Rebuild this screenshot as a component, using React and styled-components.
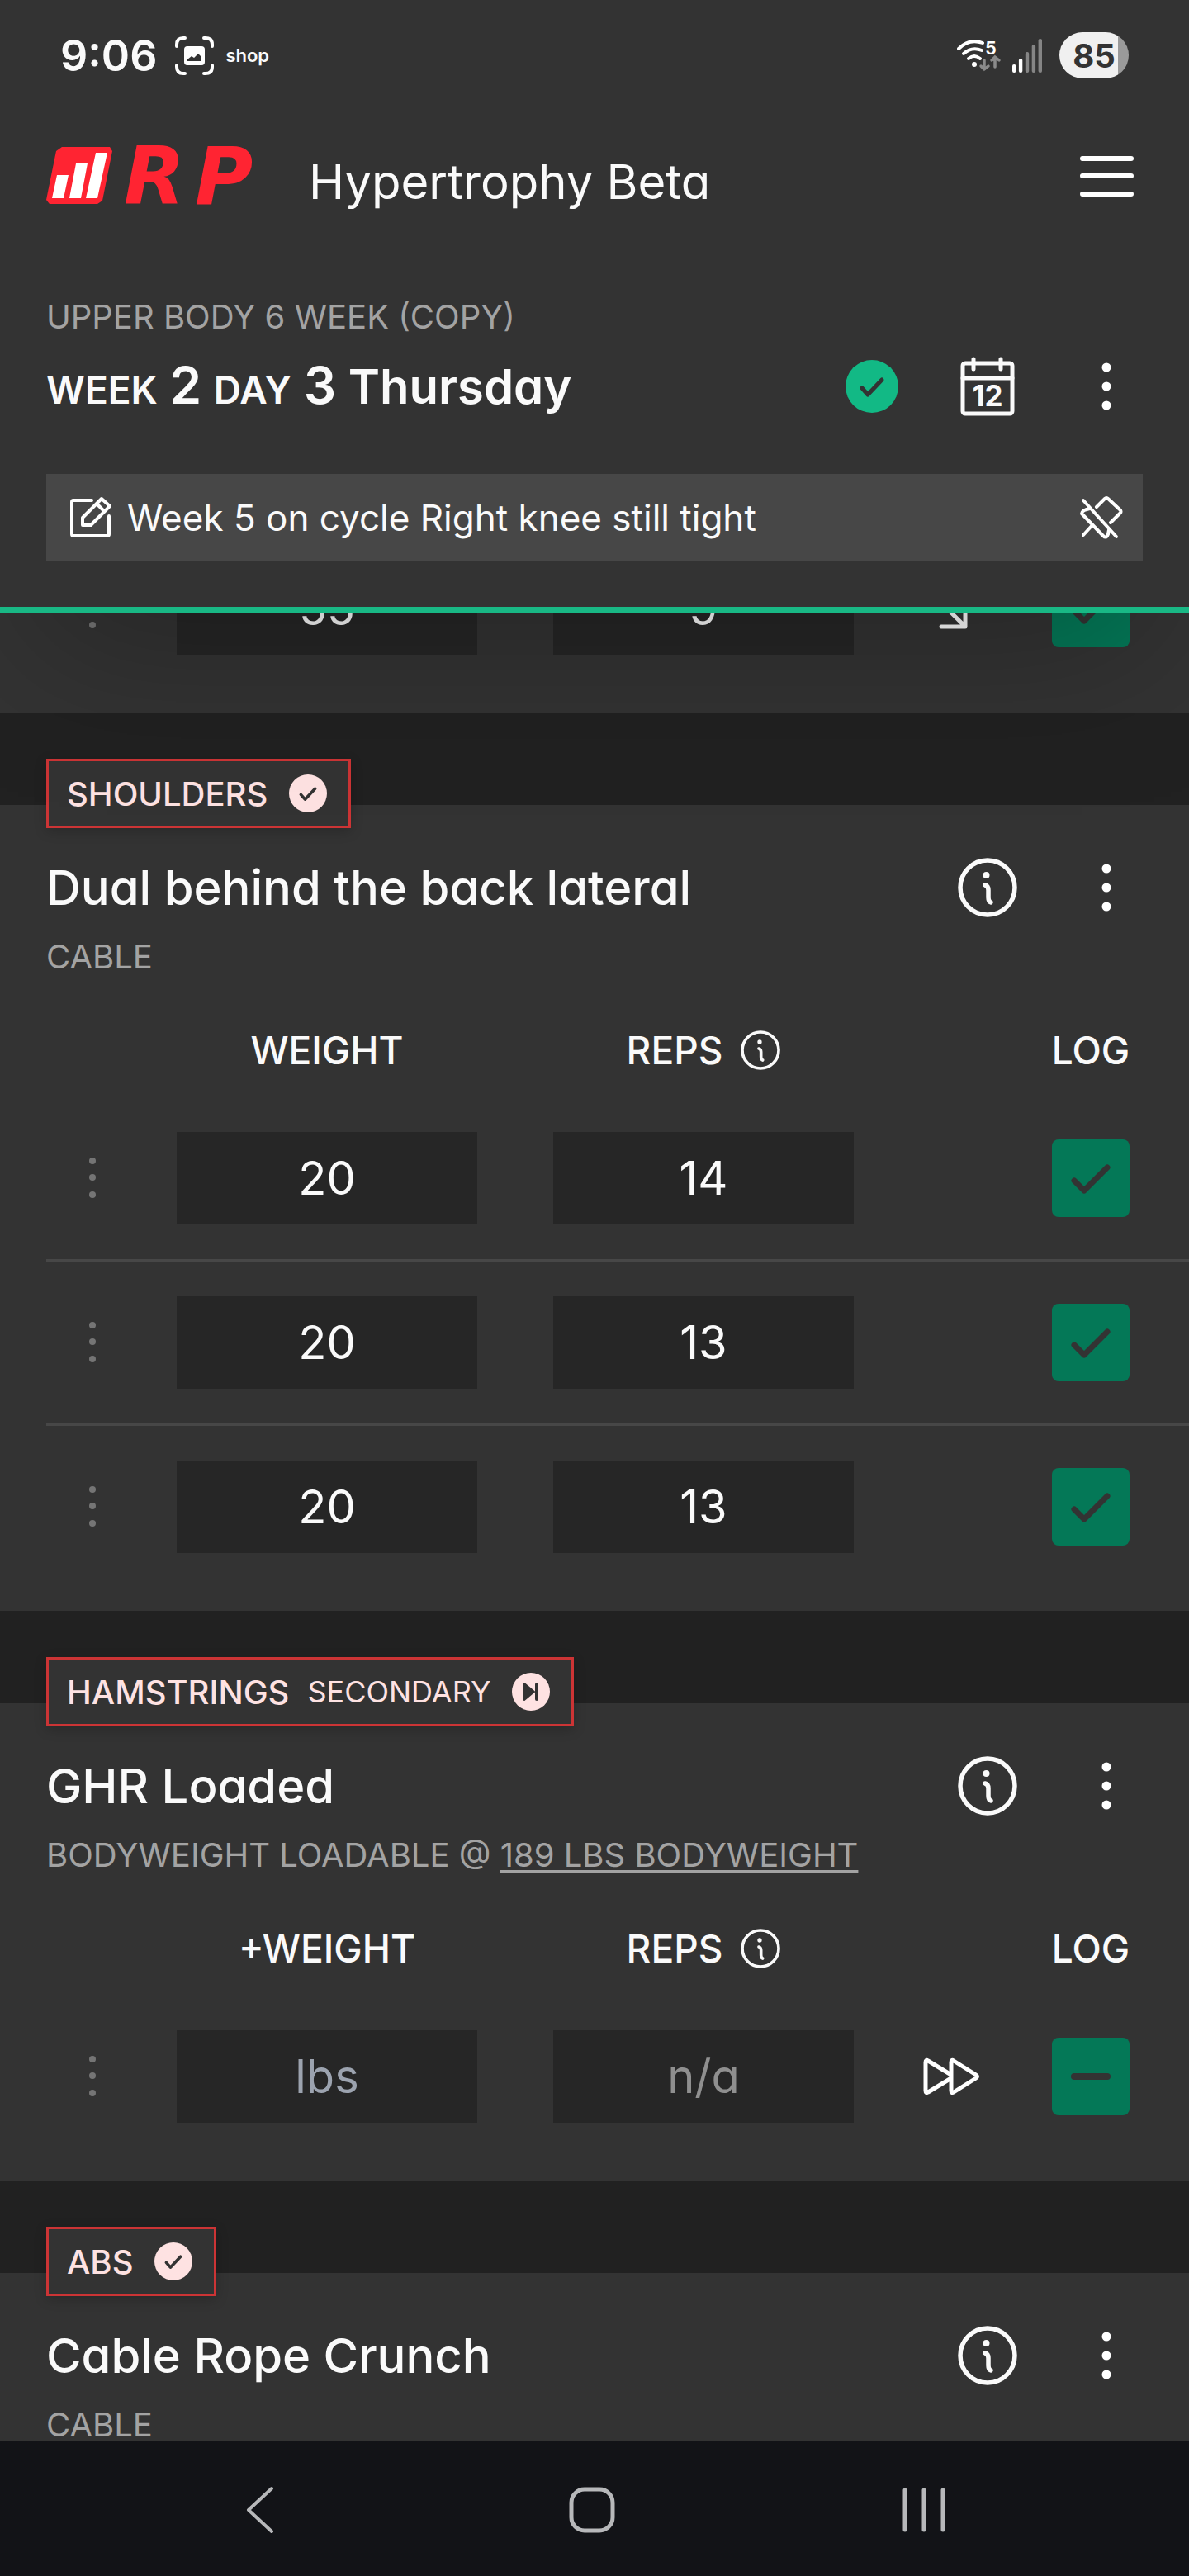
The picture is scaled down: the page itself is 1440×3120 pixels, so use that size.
import React, { useState } from 'react';
import styled, { createGlobalStyle } from 'styled-components';

const GlobalStyle = createGlobalStyle`
  * {
    box-sizing: border-box;
  }

  body {
    margin: 0;
    background: #212121;
    color: #fafafa;
    font-family: Inter, "Open Sans", sans-serif;
    font-feature-settings: "cv11";
  }

  button, input {
    font: inherit;
    font-feature-settings: inherit;
    color: inherit;
  }

  svg {
    display: block;
    flex: none;
  }
`;

/*============ layout ==============*/

const Screen = styled.div`
  display: flex;
  flex-direction: column;
  height: 100vh;
`;

const Header = styled.header`
  position: relative;
  z-index: 2;
  flex: none;
  background: #333;
  border-bottom: 7px solid #19b885;
  box-shadow: 0 88px 175px -42px rgba(0, 0, 0, 0.25);
`;

// the list is scrolled a little way under the header
const Workout = styled.main`
  flex: 1;
  min-height: 0;
  margin-top: -103px;
  overflow: hidden;
`;

const Row = styled.div`
  display: flex;
  align-items: center;
  gap: ${({ $gap }) => $gap || 0}px;
`;

const IconButton = styled.button`
  display: flex;
  align-items: center;
  justify-content: center;
  flex: none;
  width: 72px;
  height: 72px;
  padding: 0;
  border: 0;
  background: none;
  cursor: pointer;
`;

/*============ status bar ==============*/

const StatusBar = styled(Row)`
  justify-content: space-between;
  height: 134px;
  padding: 0 73px;
`;

const Clock = styled.time`
  font-size: 52px;
  font-weight: 600;
  margin-right: 8px;
`;

const ShopLabel = styled.span`
  font-size: 22px;
  font-weight: 600;
`;

const Battery = styled.div`
  display: flex;
  align-items: center;
  justify-content: center;
  width: 84px;
  height: 56px;
  margin-left: 8px;
  border-radius: 28px;
  background: linear-gradient(90deg, #f0f0f0 85%, #9a9a9a 85%);
  color: #333;
  font-size: 40px;
  font-weight: 700;
`;

/*============ app bar ==============*/

const AppBar = styled(Row)`
  height: 157px;
  padding: 0 64px 0 56px;
`;

const AppTitle = styled.h1`
  flex: 1;
  margin: 0 0 0 52px;
  padding-top: 14px;
  font-size: 58px;
  line-height: 72px;
  font-weight: 400;
`;

const Meso = styled.section`
  padding: 63px 56px 56px;
`;

const Muted = styled.p`
  margin: 0;
  color: #a3a3a3;
  font-size: 40px;
  line-height: 60px;
  text-transform: uppercase;

  a {
    color: inherit;
    text-decoration-thickness: 4px;
    text-underline-offset: 4px;
    text-decoration-skip-ink: none;
  }
`;

const DayRow = styled(Row)`
  margin: 18px 0 70px;
  padding-right: 8px;
`;

const DayTitle = styled.h2`
  flex: 1;
  margin: 0;
  font-size: 58px;
  line-height: 72px;
  font-weight: 600;

  small, strong {
    line-height: 1;
  }

  small {
    font-size: 46px;
  }

  strong {
    font-size: 62px;
    font-weight: 600;
  }
`;

const Note = styled(Row)`
  height: 105px;
  padding: 0 14px 0 28px;
  background: #474747;
`;

const NoteText = styled.span`
  flex: 1;
  padding-left: 18px;
  font-size: 44px;
  line-height: 60px;
`;

/*============ exercise ==============*/

const Card = styled.section`
  margin-bottom: 112px;
  padding: 0 0 28px 56px;
  background: #333;
`;

const Tag = styled.div`
  display: inline-flex;
  align-items: center;
  gap: 22px;
  height: 84px;
  margin-top: -56px;
  padding: 0 26px 0 22px;
  border: 3px solid #cc3435;
  background: #333;
  box-shadow: 0 4px 14px rgba(0, 0, 0, 0.2);
  color: #fee2e2;
  font-size: 40px;
  font-weight: 500;
  text-transform: uppercase;
  vertical-align: top;

  small {
    font-size: 36px;
    font-weight: 400;
  }

  svg {
    margin-left: 4px;
  }
`;

const TitleRow = styled(Row)`
  margin: 36px 0 18px;
  padding-right: 64px;
`;

const Title = styled.h3`
  flex: 1;
  margin: 0;
  font-size: 58px;
  line-height: 72px;
  font-weight: 500;
`;

const Sets = styled.table`
  display: block;

  thead, tbody {
    display: block;
  }
`;

const SetRow = styled.tr`
  display: grid;
  grid-template-columns: 112px 1fr 1fr 144px 194px;
  align-items: center;
  padding: 42px 22px 42px 0;

  & + & {
    border-top: 3px solid #474747;
  }
`;

const HeadRow = styled(SetRow)`
  padding: 47px 22px 21px 0;
`;

const Th = styled.th`
  display: flex;
  align-items: center;
  justify-content: center;
  gap: 22px;
  height: 72px;
  padding: 0;
  font-size: 46px;
  font-weight: 500;

  button {
    width: 48px;
    height: 48px;
  }
`;

const Td = styled.td`
  display: flex;
  align-items: center;
  justify-content: center;
  padding: 0 ${({ $field }) => ($field ? 46 : 0)}px;
`;

const Field = styled.input`
  width: 100%;
  height: 112px;
  padding: 0;
  border: 0;
  border-radius: 0;
  outline: none;
  background: #262626;
  font-size: 56px;
  text-align: center;

  &::placeholder {
    color: ${({ $skipped }) => ($skipped ? '#8f8f8f' : '#9ca3af')};
    opacity: 1;
  }
`;

const LogBox = styled.label`
  display: grid;
  place-items: center;
  cursor: pointer;

  input, svg {
    grid-area: 1 / 1;
  }

  input {
    appearance: none;
    width: 94px;
    height: 94px;
    margin: 0;
    border-radius: 8px;
    background: #047857;
  }

  svg {
    pointer-events: none;
  }
`;

/*============ android nav ==============*/

const PhoneNav = styled.nav`
  position: relative;
  z-index: 2;
  display: grid;
  grid-template-columns: repeat(3, 1fr);
  place-items: center;
  flex: none;
  height: 164px;
  padding: 4px 120px 0 114px;
  background: #121317;
`;

/*============ icons ==============*/

const CaptureIcon = () => (
  <svg width="47" height="47" viewBox="0 0 47 47" fill="none" stroke="#fff" strokeWidth="4" strokeLinecap="round">
    <path d="M2 12V10Q2 2 10 2H12M35 2H37Q45 2 45 10V12M45 35V37Q45 45 37 45H35M12 45H10Q2 45 2 37V35" />
    <rect x="11" y="12" width="25" height="23" rx="4" fill="#fff" stroke="none" />
    <path d="M15 30V28L20 24L23 26L28 21L32 25V30Z" fill="#333" stroke="none" />
  </svg>
);

const WifiIcon = () => (
  <svg width="54" height="60" viewBox="0 -10 54 60" fill="none" strokeLinecap="round">
    <g stroke="#fff" strokeWidth="4">
      <path d="M2 12Q15 -1 31 5M8 18Q18 9 30 14M14 24Q21 18 28 24" />
    </g>
    <circle cx="21" cy="31" r="3" fill="#fff" />
    <text x="34" y="19" fill="#fff" fontSize="22" fontWeight="600">5</text>
    <path d="M33 26V37M29 33L33 37L38 33M46 34V22M42 26L46 22L51 26" stroke="#8a8a8a" strokeWidth="3.5" />
  </svg>
);

const SignalIcon = () => (
  <svg width="36" height="41" viewBox="0 0 36 41">
    {[31, 24, 16, 7, 0].map((top, i) => (
      <rect key={top} x={i * 7.9} y={top} width="4.4" height={41 - top} rx="2" fill={i < 2 ? '#fff' : '#858585'} />
    ))}
  </svg>
);

const Logo = () => (
  <svg width="266" height="120" viewBox="0 -25 266 120" role="img" aria-label="RP">
    <path d="M19 0H77L80 5L68 65L62 69H4L0 64L12 5Z" fill="#ff2432" />
    <path d="M13 34H27L21 62H7ZM36 20H50L42 62H28ZM60 7H74L62 62H48Z" fill="#fff" />
    <g fill="#ff2432" fontFamily="DejaVu Sans" fontSize="96" fontWeight="700" fontStyle="italic">
      <text x="94" y="69">R</text>
      <text x="180" y="69">P</text>
    </g>
  </svg>
);

const MenuIcon = () => (
  <svg width="72" height="72" viewBox="0 0 72 72" stroke="#fff" strokeWidth="6" strokeLinecap="round">
    <path d="M7 15H66M7 36H66M7 58H66" />
  </svg>
);

const CheckBadge = ({ size, color }) => (
  <svg width={size} height={size} viewBox="0 0 64 64" fill="none">
    <circle cx="32" cy="32" r="32" fill={color} />
    <path d="M20 34L27 42L44 24" stroke="#333" strokeWidth="5" strokeLinecap="round" strokeLinejoin="round" />
  </svg>
);

const SkipBadge = () => (
  <svg width="46" height="46" viewBox="0 0 46 46">
    <circle cx="23" cy="23" r="23" fill="#fee2e2" />
    <path d="M15 13L27 23L15 33Z" fill="#333" stroke="#333" strokeWidth="2" strokeLinejoin="round" />
    <path d="M30 14V32" stroke="#333" strokeWidth="4" strokeLinecap="round" />
  </svg>
);

const CalendarIcon = () => (
  <svg width="66" height="72" viewBox="0 0 66 72" fill="none" stroke="#fafafa" strokeWidth="5" strokeLinecap="round">
    <rect x="3" y="8" width="60" height="61" rx="3" />
    <path d="M3 26H63M16 3V15M49 3V15" />
    <text x="33" y="60" textAnchor="middle" fill="#fafafa" stroke="none" fontSize="35" fontWeight="700">12</text>
  </svg>
);

const DotsIcon = () => (
  <svg width="12" height="60" viewBox="0 0 12 60" fill="#fff">
    <circle cx="6" cy="7" r="5.5" />
    <circle cx="6" cy="30" r="5.5" />
    <circle cx="6" cy="53" r="5.5" />
  </svg>
);

const HandleIcon = () => (
  <svg width="8" height="50" viewBox="0 0 8 50" fill="#757575">
    <circle cx="4" cy="4" r="4" />
    <circle cx="4" cy="24" r="4" />
    <circle cx="4" cy="45" r="4" />
  </svg>
);

const EditIcon = () => (
  <svg width="52" height="52" viewBox="0 0 52 52" fill="none" stroke="#fff" strokeWidth="4" strokeLinecap="round" strokeLinejoin="round">
    <path d="M27 5H5Q3 5 3 7V46Q3 48 5 48H46Q48 48 48 46V24" />
    <path d="M16 26L39 3L49 12L26 35H16ZM33 9L42 18" />
  </svg>
);

const PinOffIcon = () => (
  <svg width="52" height="52" viewBox="0 0 52 52" fill="none" stroke="#fff" strokeWidth="4" strokeLinecap="round" strokeLinejoin="round">
    <path d="M4 5L44 49" />
    <path d="M20 13L30 3Q32 1 34 3L49 17Q50 19 49 20L37 32" />
    <path d="M12 15Q2 17 2 21L28 48Q32 52 34 46L35 41M14 36L4 47" />
  </svg>
);

const InfoIcon = ({ size }) => (
  <svg width={size} height={size} viewBox="0 0 72 72" fill="none" stroke="#fafafa" strokeLinecap="round">
    <circle cx="36" cy="36" r="33" strokeWidth="5.5" />
    <circle cx="34.5" cy="21" r="4" fill="#fafafa" stroke="none" />
    <path d="M33 33Q37 34 37 39V48Q37 53 40 54" strokeWidth="5.5" />
  </svg>
);

const DownArrowIcon = () => (
  <svg width="72" height="72" viewBox="0 0 72 72" fill="none" stroke="#fff" strokeWidth="5" strokeLinecap="round" strokeLinejoin="round">
    <path d="M22 27L52 57M24 58H53V29" />
  </svg>
);

const ForwardIcon = () => (
  <svg width="70" height="46" viewBox="0 0 70 46" fill="none" stroke="#fff" strokeWidth="5" strokeLinejoin="round">
    <path d="M35 21L7 4Q4 2 4 6V40Q4 44 7 42L35 25" />
    <path d="M35 6Q35 2 38 4L65 21Q68 23 65 25L38 42Q35 44 35 40Z" />
  </svg>
);

/*============ data ==============*/

const exercises = [
  {
    sets: [{ weight: '55', reps: '9', trend: 'down' }],
  },
  {
    muscle: 'Shoulders',
    name: 'Dual behind the back lateral',
    equipment: 'Cable',
    weightLabel: 'WEIGHT',
    sets: [
      { weight: '20', reps: '14' },
      { weight: '20', reps: '13' },
      { weight: '20', reps: '13' },
    ],
  },
  {
    muscle: 'Hamstrings',
    secondary: true,
    name: 'GHR Loaded',
    equipment: 'Bodyweight loadable',
    bodyweight: '189 lbs bodyweight',
    weightLabel: '+WEIGHT',
    sets: [{ weight: '', reps: '', trend: 'skip' }],
  },
  {
    muscle: 'Abs',
    name: 'Cable Rope Crunch',
    equipment: 'Cable',
    sets: [],
  },
];

/*============ components ==============*/

const SetLine = ({ set }) => {
  const [weight, setWeight] = useState(set.weight);
  const [reps, setReps] = useState(set.reps);
  const skipped = set.trend === 'skip';

  return (
    <SetRow>
      <Td>
        <IconButton aria-label="Set options"><HandleIcon /></IconButton>
      </Td>
      <Td $field>
        <Field aria-label="Weight" placeholder="lbs" value={weight} onChange={(e) => setWeight(e.target.value)} />
      </Td>
      <Td $field>
        <Field
          aria-label="Reps"
          placeholder={skipped ? 'n/a' : 'reps'}
          $skipped={skipped}
          value={reps}
          onChange={(e) => setReps(e.target.value)}
        />
      </Td>
      <Td>
        {set.trend === 'down' && <DownArrowIcon />}
        {skipped && <ForwardIcon />}
      </Td>
      <Td>
        <LogBox>
          <input type="checkbox" aria-label="Log set" defaultChecked={!skipped} />
          <svg width="56" height="56" viewBox="0 0 56 56" fill="none" stroke="#333" strokeLinecap="round" strokeLinejoin="round">
            {skipped
              ? <path d="M8 28H48" strokeWidth="8" />
              : <path d="M8 31L20 43L48 15" strokeWidth="7" />}
          </svg>
        </LogBox>
      </Td>
    </SetRow>
  );
};

const Exercise = ({ exercise }) => (
  <Card>
    {exercise.muscle && (
      <Tag>
        <span>{exercise.muscle}</span>
        {exercise.secondary && <small>Secondary</small>}
        {exercise.secondary ? <SkipBadge /> : <CheckBadge size={46} color="#fee2e2" />}
      </Tag>
    )}
    {exercise.name && (
      <>
        <TitleRow $gap={72}>
          <Title>{exercise.name}</Title>
          <IconButton aria-label="Exercise info"><InfoIcon size={72} /></IconButton>
          <IconButton aria-label="Exercise menu"><DotsIcon /></IconButton>
        </TitleRow>
        <Muted>
          {exercise.equipment}
          {exercise.bodyweight && <> @ <a href="#bodyweight">{exercise.bodyweight}</a></>}
        </Muted>
      </>
    )}
    {exercise.sets.length > 0 && (
      <Sets>
        {exercise.weightLabel && (
          <thead>
            <HeadRow>
              <Th />
              <Th>{exercise.weightLabel}</Th>
              <Th>
                REPS
                <IconButton aria-label="Reps info"><InfoIcon size={48} /></IconButton>
              </Th>
              <Th />
              <Th>LOG</Th>
            </HeadRow>
          </thead>
        )}
        <tbody>
          {exercise.sets.map((set, i) => <SetLine key={i} set={set} />)}
        </tbody>
      </Sets>
    )}
  </Card>
);

const App = () => {
  return (
    <Screen>
      <GlobalStyle />
      <Header>
        <StatusBar>
          <Row $gap={14}>
            <Clock>9:06</Clock>
            <CaptureIcon />
            <ShopLabel>shop</ShopLabel>
          </Row>
          <Row $gap={13}>
            <WifiIcon />
            <SignalIcon />
            <Battery>85</Battery>
          </Row>
        </StatusBar>

        <AppBar>
          <Logo />
          <AppTitle>Hypertrophy Beta</AppTitle>
          <IconButton aria-label="Menu"><MenuIcon /></IconButton>
        </AppBar>

        <Meso>
          <Muted>Upper Body 6 Week (copy)</Muted>
          <DayRow $gap={72}>
            <DayTitle>
              <small>WEEK</small> <strong>2</strong> <small>DAY</small> <strong>3</strong> Thursday
            </DayTitle>
            <CheckBadge size={64} color="#12b985" />
            <IconButton aria-label="Calendar"><CalendarIcon /></IconButton>
            <IconButton aria-label="Workout menu"><DotsIcon /></IconButton>
          </DayRow>
          <Note>
            <EditIcon />
            <NoteText>Week 5 on cycle Right knee still tight</NoteText>
            <IconButton aria-label="Unpin note"><PinOffIcon /></IconButton>
          </Note>
        </Meso>
      </Header>

      <Workout>
        {exercises.map((exercise, i) => <Exercise key={i} exercise={exercise} />)}
      </Workout>

      <PhoneNav>
        <IconButton aria-label="Back">
          <svg width="36" height="58" viewBox="0 0 36 58" fill="none" stroke="#b7b8ba" strokeWidth="4" strokeLinecap="round" strokeLinejoin="round">
            <path d="M32 3L4 29L32 55" />
          </svg>
        </IconButton>
        <IconButton aria-label="Home">
          <svg width="56" height="56" viewBox="0 0 56 56" fill="none" stroke="#b7b8ba" strokeWidth="5">
            <rect x="3" y="3" width="50" height="50" rx="16" />
          </svg>
        </IconButton>
        <IconButton aria-label="Recent apps">
          <svg width="54" height="54" viewBox="0 0 54 54" stroke="#b7b8ba" strokeWidth="5" strokeLinecap="round">
            <path d="M4 3V51M27 3V51M50 3V51" />
          </svg>
        </IconButton>
      </PhoneNav>
    </Screen>
  );
};

export default App;
